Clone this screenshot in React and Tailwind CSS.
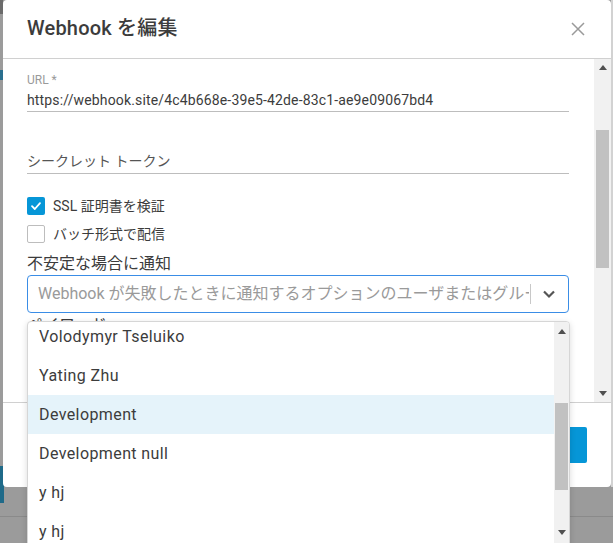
const FONT = { fontFamily: 'Roboto, "Noto Sans CJK JP", "Noto Sans", sans-serif' };

const OPTIONS = ['Volodymyr Tseluiko', 'Yating Zhu', 'Development', 'Development null', 'y hj', 'y hj'];

function ArrowUp() {
  return <div className="w-0 h-0 border-x-[4px] border-x-transparent border-b-[5px] border-b-[#505050]" />;
}

function ArrowDown() {
  return <div className="w-0 h-0 border-x-[4px] border-x-transparent border-t-[5px] border-t-[#505050]" />;
}

function Checkbox({ checked, label }) {
  return (
    <label className="flex items-center h-[20px] gap-[8px] text-[14px] text-[#3c3c3c]">
      {checked ? (
        <span className="w-[18px] h-[18px] rounded-[2px] bg-[#0696d7] flex items-center justify-center">
          <svg width="12" height="12" viewBox="0 0 12 12" fill="none">
            <path d="M2 6.2 L4.8 9 L10 3.2" stroke="white" strokeWidth="1.8" strokeLinecap="round" strokeLinejoin="round" />
          </svg>
        </span>
      ) : (
        <span className="w-[18px] h-[18px] rounded-[2px] border border-[#bdbdbd] bg-white" />
      )}
      <span>{label}</span>
    </label>
  );
}

export default function App() {
  return (
    <div className="relative w-[613px] h-[543px] overflow-hidden bg-[#9b9b9b]" style={FONT}>
      {/* page behind the overlay */}
      <div className="absolute left-0 top-[466px] w-[4px] h-[37px] bg-[#1f6a89]" />
      <div className="absolute left-0 top-[516px] w-[613px] h-px bg-[#8a8a8a]" />
      <div className="absolute left-0 top-[70px] w-[3px] h-[10px] bg-[#2a6f8e]" />
      <div className="absolute left-0 top-[0px] w-[3px] h-[14px] bg-[#6b6b6b]" />
      <div className="absolute right-0 top-0 w-[2px] h-[487px] bg-[#d2d2d2]" />

      {/* dialog */}
      <div className="absolute left-[3px] top-0 w-[608px] h-[487px] bg-white rounded-[4px] flex flex-col overflow-hidden">
        <header className="h-[59px] shrink-0 border-b border-[#d0d0d0] flex items-center justify-between pl-[24px] pr-[26px]">
          <h2 className="text-[20px] leading-[24px] font-medium text-[#3c3c3c] tracking-[0.2px] pb-[2px]">Webhook を編集</h2>
          <svg width="14" height="14" viewBox="0 0 14 14" fill="none">
            <path d="M1 1 L13 13 M13 1 L1 13" stroke="#9a9a9a" strokeWidth="1.5" />
          </svg>
        </header>

        <div className="flex h-[343px] shrink-0">
          <div className="flex-1 pl-[24px] pr-[25px] overflow-hidden">
            <div className="pt-[13px] border-b border-[#bdbdbd] pb-[1px]">
              <div className="text-[12px] leading-[16px] text-[#9a9a9a]">URL *</div>
              <div className="mt-[2px] text-[14px] leading-[20px] text-[#3c3c3c] tracking-[0.15px]">
                https://webhook.site/4c4b668e-39e5-42de-83c1-ae9e09067bd4
              </div>
            </div>

            <div className="mt-[39px] border-b border-[#bdbdbd] pb-[2px]">
              <div className="text-[14px] leading-[20px] text-[#555]">シークレット トークン</div>
            </div>

            <div className="mt-[22px] flex flex-col gap-[8px]">
              <Checkbox checked label="SSL 証明書を検証" />
              <Checkbox label="バッチ形式で配信" />
            </div>

            <div className="mt-[10px] text-[16px] leading-[20px] text-[#3c3c3c]">不安定な場合に通知</div>
            <div className="mt-[1px] h-[38px] rounded-[4px] border border-[#3a8de6] flex items-center pl-[10px] pr-[12px]">
              <span className="flex-1 min-w-0 overflow-hidden whitespace-nowrap text-[16px] text-[#9a9a9a]">
                Webhook が失敗したときに通知するオプションのユーザまたはグループを選択
              </span>
              <span className="w-px h-[20px] bg-[#c8c8c8] mx-[1px]" />
              <svg className="ml-[10px]" width="14" height="10" viewBox="0 0 14 10" fill="none">
                <path d="M2 2.5 L7 7.5 L12 2.5" stroke="#555" strokeWidth="2.2" />
              </svg>
            </div>
            <div className="mt-[2px] text-[16px] leading-[20px] text-[#3c3c3c]">ペイロード</div>
          </div>

          <div className="w-[17px] bg-[#f1f1f1] flex flex-col items-center">
            <div className="h-[17px] flex items-center justify-center"><ArrowUp /></div>
            <div className="mt-[54px] w-[13px] h-[138px] bg-[#c1c1c1]" />
            <div className="flex-1" />
            <div className="h-[17px] flex items-center justify-center"><ArrowDown /></div>
          </div>
        </div>

        <footer className="flex-1 border-t border-[#d0d0d0] flex items-center justify-end pr-[24px]">
          <button className="w-[72px] h-[36px] rounded-[2px] bg-[#0696d7] text-white text-[14px]">保存</button>
        </footer>
      </div>

      {/* dropdown menu */}
      <div className="absolute left-[27px] top-[321px] w-[543px] h-[230px] bg-white border border-[#d6d6d6] rounded-t-[4px] shadow-[0_2px_6px_rgba(0,0,0,0.15)] flex overflow-hidden">
        <ul className="flex-1 mt-[-5px]">
          {OPTIONS.map((o, i) => (
            <li
              key={i}
              className={`h-[39px] flex items-center pl-[11px] text-[16px] text-[#3c3c3c] tracking-[0.4px] ${i === 2 ? 'bg-[#e5f3fa]' : ''}`}
            >
              {o}
            </li>
          ))}
        </ul>
        <div className="w-[15px] bg-[#f1f1f1] flex flex-col items-center">
          <div className="h-[18px] flex items-center justify-center"><ArrowUp /></div>
          <div className="mt-[63px] w-[13px] h-[87px] bg-[#c1c1c1]" />
          <div className="flex-1" />
          <div className="h-[20px] mb-[8px] flex items-center justify-center"><ArrowDown /></div>
        </div>
      </div>
    </div>
  );
}
